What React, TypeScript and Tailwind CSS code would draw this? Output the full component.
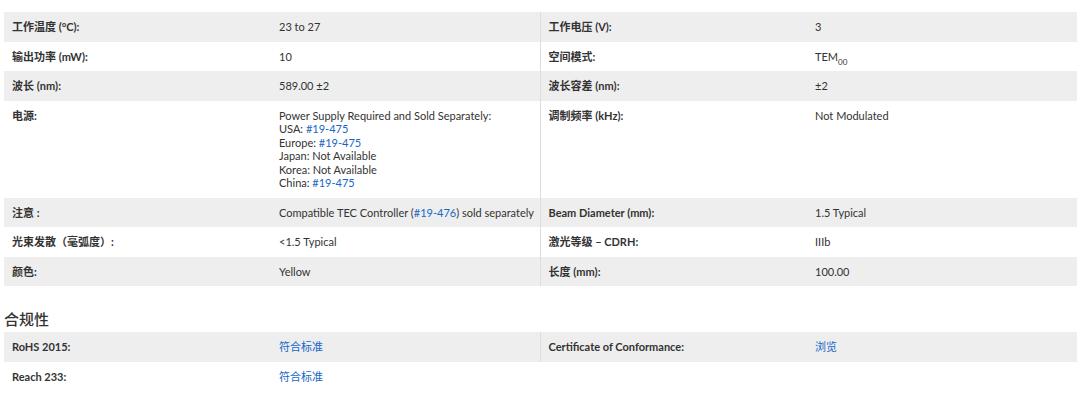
import React from "react";

type Cell = React.ReactNode;

interface SpecRow {
  label: Cell;
  value: Cell;
  label2?: Cell;
  value2?: Cell;
}

const Link = ({ children }: { children: React.ReactNode }) => (
  <a className="text-[#1667c7] no-underline" href="#">
    {children}
  </a>
);

const specs: SpecRow[] = [
  { label: "工作温度 (°C):", value: "23 to 27", label2: "工作电压 (V):", value2: "3" },
  {
    label: "输出功率 (mW):",
    value: "10",
    label2: "空间模式:",
    value2: (
      <>
        TEM<sub className="text-[8px] align-[-2px]">00</sub>
      </>
    ),
  },
  { label: "波长 (nm):", value: "589.00 ±2", label2: "波长容差 (nm):", value2: "±2" },
  {
    label: "电源:",
    value: (
      <>
        Power Supply Required and Sold Separately:
        <br />
        USA: <Link>#19-475</Link>
        <br />
        Europe: <Link>#19-475</Link>
        <br />
        Japan: Not Available
        <br />
        Korea: Not Available
        <br />
        China: <Link>#19-475</Link>
      </>
    ),
    label2: "调制频率 (kHz):",
    value2: "Not Modulated",
  },
  {
    label: "注意 :",
    value: (
      <span className="whitespace-nowrap">
        Compatible TEC Controller (<Link>#19-476</Link>) sold separately
      </span>
    ),
    label2: "Beam Diameter (mm):",
    value2: "1.5 Typical",
  },
  { label: "光束发散（毫弧度）:", value: "<1.5 Typical", label2: "激光等级 – CDRH:", value2: "IIIb" },
  { label: "颜色:", value: "Yellow", label2: "长度 (mm):", value2: "100.00" },
];

const compliance: SpecRow[] = [
  {
    label: "RoHS 2015:",
    value: <Link>符合标准</Link>,
    label2: "Certificate of Conformance:",
    value2: <Link>浏览</Link>,
  },
  { label: "Reach 233:", value: <Link>符合标准</Link> },
];

const SpecTable = ({ rows }: { rows: SpecRow[] }) => (
  <table className="w-full border-collapse table-fixed">
    <colgroup>
      <col className="w-[267px]" />
      <col className="w-[269px]" />
      <col className="w-[267px]" />
      <col />
    </colgroup>
    <tbody>
      {rows.map((r, i) => (
        <tr key={i} className={i % 2 === 0 ? "bg-[#eeeeee]" : "bg-white"}>
          <td className="px-2 py-2 align-top font-bold">{r.label}</td>
          <td className="px-2 py-2 align-top">{r.value}</td>
          {r.label2 !== undefined ? (
            <>
              <td className="px-2 py-2 align-top font-bold border-l border-[#dddddd]">
                {r.label2}
              </td>
              <td className="px-2 py-2 align-top">{r.value2}</td>
            </>
          ) : (
            <td colSpan={2} className="bg-white" />
          )}
        </tr>
      ))}
    </tbody>
  </table>
);

export default function App() {
  return (
    <div
      className="w-[1082px] h-[411px] bg-white text-[#333333] text-[11px] leading-[13.5px] pl-[4px] pr-[5px] pt-[12px]"
      style={{ fontFamily: "Lato, 'Noto Sans CJK SC', sans-serif" }}
    >
      <SpecTable rows={specs} />
      <h2 className="mt-[23px] mb-[3px] text-[15px] leading-[20px] font-medium text-[#333333]">
        合规性
      </h2>
      <SpecTable rows={compliance} />
    </div>
  );
}
